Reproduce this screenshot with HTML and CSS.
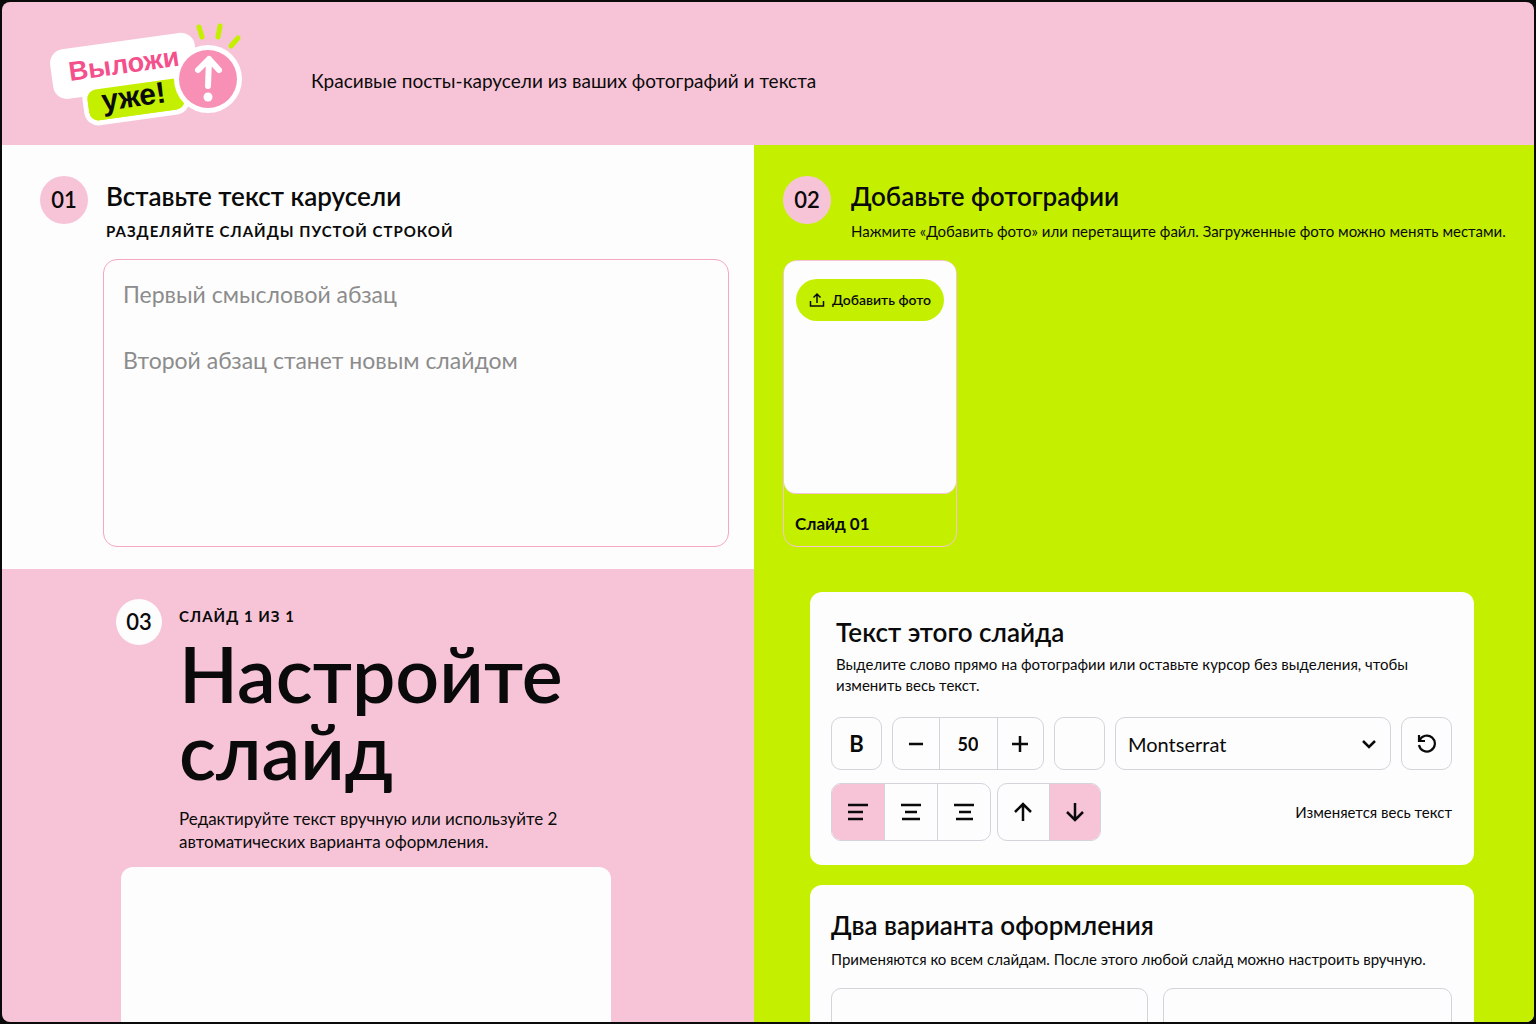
FILE: index.html
```html
<!DOCTYPE html>
<html lang="ru">
<head>
<meta charset="utf-8">
<meta name="viewport" content="width=device-width, initial-scale=1">
<title>Выложи уже!</title>
<link rel="stylesheet" href="styles.css">
</head>
<body>
<div class="app">
  <header class="header">
    <svg class="logo" viewBox="0 0 220 130" role="img" aria-label="Выложи уже!">
      <rect x="48" y="74" width="96" height="31" rx="9" transform="rotate(-8 96 90)" fill="#c4f000" stroke="#fff" stroke-width="10" paint-order="stroke"/>
      <rect x="11" y="31" width="146" height="50" rx="14" transform="rotate(-8 83 56)" fill="#fff"/>
      <rect x="48" y="74" width="96" height="31" rx="9" transform="rotate(-8 96 90)" fill="#c4f000"/>
      <circle cx="168" cy="69" r="34" fill="#fff"/>
      <circle cx="168" cy="69" r="29" fill="#f88fb4"/>
      <path d="M169 49 168 76M158 60 169 49l10 11" fill="none" stroke="#fff" stroke-width="6" stroke-linecap="round" stroke-linejoin="round"/>
      <circle cx="168" cy="87" r="4.5" fill="#fff"/>
      <path d="m159 17 3 10M180 16l-2 11M198 28l-7 8" fill="none" stroke="#c4f000" stroke-width="5" stroke-linecap="round"/>
      <text class="logo-text logo-text-pink" transform="translate(30 71) rotate(-8)">Выложи</text>
      <text class="logo-text" transform="translate(63 101) rotate(-8)">уже!</text>
    </svg>
    <p class="tagline">Красивые посты-карусели из ваших фотографий и текста</p>
  </header>

  <main class="board">
    <div class="column">
      <section class="step step-text">
        <div class="step-head">
          <span class="badge">01</span>
          <div>
            <h2 class="title"><label for="carousel">Вставьте текст карусели</label></h2>
            <p class="caps">РАЗДЕЛЯЙТЕ СЛАЙДЫ ПУСТОЙ СТРОКОЙ</p>
          </div>
        </div>
        <textarea class="source" id="carousel" placeholder="Первый смысловой абзац&#10;&#10;Второй абзац станет новым слайдом"></textarea>
      </section>

      <section class="step-slide">
        <div class="slide-head">
          <span class="badge badge-white">03</span>
          <div>
            <p class="caps caps-small">СЛАЙД 1 ИЗ 1</p>
            <h1 class="display">Настройте слайд</h1>
            <p class="lead">Редактируйте текст вручную или используйте 2 автоматических варианта оформления.</p>
          </div>
        </div>
        <div class="canvas"></div>
      </section>
    </div>

    <div class="column column-lime">
      <section class="step step-photos">
        <div class="step-head">
          <span class="badge">02</span>
          <div>
            <h2 class="title">Добавьте фотографии</h2>
            <p class="hint">Нажмите «Добавить фото» или перетащите файл. Загруженные фото можно менять местами.</p>
          </div>
        </div>
        <article class="photo">
          <div class="photo-drop">
            <button class="upload" type="button">
              <svg width="16" height="16" viewBox="0 0 16 16" fill="none" stroke="currentColor" stroke-width="1.5"><path d="M8 11V2M4.500 5.500 8 2l3.500 3.500M1.500 9v5h13V9"/></svg>
              Добавить фото
            </button>
          </div>
          <h3 class="photo-name">Слайд 01</h3>
        </article>
      </section>

      <div class="panels">
        <section class="panel">
          <div class="panel-intro">
            <h2 class="title">Текст этого слайда</h2>
            <p class="note">Выделите слово прямо на фотографии или оставьте курсор без выделения, чтобы изменить весь текст.</p>
          </div>
          <div class="tools">
            <button class="tool bold" type="button" aria-label="Жирный">B</button>
            <div class="group stepper">
              <button type="button" aria-label="Уменьшить"><svg width="16" height="16" viewBox="0 0 16 16" stroke="currentColor" stroke-width="2.500"><path d="M1 8h14"/></svg></button>
              <input type="text" value="50" aria-label="Размер текста">
              <button type="button" aria-label="Увеличить"><svg width="16" height="16" viewBox="0 0 16 16" stroke="currentColor" stroke-width="2.500"><path d="M0 8h16M8 0v16"/></svg></button>
            </div>
            <input class="tool swatch" type="color" value="#fdfdfd" aria-label="Цвет текста">
            <div class="font-field">
              <select aria-label="Шрифт"><option>Montserrat</option></select>
              <svg width="16" height="16" viewBox="0 0 16 16" fill="none" stroke="currentColor" stroke-width="2.500"><path d="m2 5 6 6 6-6"/></svg>
            </div>
            <button class="tool" type="button" aria-label="Сбросить"><svg width="20" height="20" viewBox="0 0 20 20" fill="none" stroke="currentColor" stroke-width="2.2"><path d="M2 1v6h6M2.500 6.500A8 8 0 1 1 2 11"/></svg></button>
          </div>
          <div class="tools tools-align">
            <div class="group group-align">
              <button class="active" type="button" aria-label="По левому краю"><svg width="20" height="20" viewBox="0 0 20 20" stroke="currentColor" stroke-width="2.500"><path d="M0 3h20M0 10h15M0 17h15"/></svg></button>
              <button type="button" aria-label="По центру"><svg width="20" height="20" viewBox="0 0 20 20" stroke="currentColor" stroke-width="2.500"><path d="M0 3h20M4 10h12M1 17h18"/></svg></button>
              <button type="button" aria-label="По правому краю"><svg width="20" height="20" viewBox="0 0 20 20" stroke="currentColor" stroke-width="2.500"><path d="M0 3h20M5 10h12M2 17h17"/></svg></button>
            </div>
            <div class="group group-vertical">
              <button type="button" aria-label="Сверху"><svg width="20" height="20" viewBox="0 0 20 20" fill="none" stroke="currentColor" stroke-width="2.500"><path d="M10 19V2M2 10l8-8 8 8"/></svg></button>
              <button class="active" type="button" aria-label="Снизу"><svg width="20" height="20" viewBox="0 0 20 20" fill="none" stroke="currentColor" stroke-width="2.500"><path d="M10 1v17M2 10l8 8 8-8"/></svg></button>
            </div>
            <p class="status">Изменяется весь текст</p>
          </div>
        </section>

        <section class="panel">
          <h2 class="title">Два варианта оформления</h2>
          <p class="note-wide">Применяются ко всем слайдам. После этого любой слайд можно настроить вручную.</p>
          <div class="variants">
            <div class="variant"></div>
            <div class="variant"></div>
          </div>
        </section>
      </div>
    </div>
  </main>
</div>
</body>
</html>
```
FILE: styles.css
```css
:root {
  --pink: #f7c4d7;
  --lime: #c4f000;
  --paper: #fdfdfd;
  --ink: #0a0a0a;
  --line: #d3d3dc;
}

* { box-sizing: border-box; }

body {
  margin: 0;
  padding: 2px;
  height: 100vh;
  overflow: hidden;
  background: #0a0a0a;
  color: var(--ink);
  font: 15px/22px Lato, "Noto Sans", sans-serif;
}

h1, h2, h3, p { margin: 0; font-weight: inherit; }
button, input, select, textarea { font: inherit; color: inherit; }
button { padding: 0; border: 0; background: none; }

.app {
  height: 100%;
  display: flex;
  flex-direction: column;
  overflow: hidden;
  border-radius: 8px;
  background: var(--pink);
}

.header {
  flex: none;
  display: flex;
  align-items: flex-start;
  gap: 51px;
  padding: 8px 38px 5px;
}
.logo { width: 220px; height: 130px; }
.logo-text { font: bold 30px "Liberation Sans", sans-serif; fill: var(--ink); }
.logo-text-pink { font-size: 27px; fill: #f4508c; }
.tagline { padding-top: 57px; font-size: 19px; line-height: 28px; }

.board {
  flex: 1;
  display: grid;
  grid-template-columns: 752fr 780fr;
}
.column { min-width: 0; }
.column-lime { background: var(--lime); }

.step { padding: 31px 25px 22px 38px; }
.step-text { background: var(--paper); }
.step-photos { padding: 31px 16px 22px 29px; }
.step-head { display: flex; gap: 18px; height: 83px; }
.step-photos .step-head { gap: 20px; height: 84px; }

.badge {
  flex: none;
  display: grid;
  place-items: center;
  width: 48px;
  height: 48px;
  border-radius: 50%;
  background: var(--pink);
  font-size: 22px;
  font-weight: 600;
}
.badge-white { width: 46px; height: 46px; background: var(--paper); }

.title { font-size: 26px; line-height: 40px; font-weight: 600; }
.caps { font-size: 15px; line-height: 30px; font-weight: 700; letter-spacing: 1px; }
.caps-small { line-height: 34px; }
.hint { line-height: 30px; white-space: nowrap; }

.source {
  display: block;
  width: calc(100% - 63px);
  height: 288px;
  margin-left: 63px;
  padding: 18px 19px;
  border: 1px solid #f7a6c3;
  border-radius: 14px;
  background: var(--paper);
  font-size: 23px;
  line-height: 33px;
  resize: none;
}
.source::placeholder { color: #8c8c8c; opacity: 1; }

.photo {
  width: 174px;
  border: 1px solid var(--pink);
  border-radius: 14px;
}
.photo-drop {
  height: 233px;
  padding: 18px 12px;
  border-bottom: 1px solid var(--pink);
  border-radius: 12px;
  background: var(--paper);
}
.upload {
  display: flex;
  align-items: center;
  justify-content: center;
  gap: 7px;
  width: 100%;
  height: 42px;
  border-radius: 21px;
  background: var(--lime);
  font-size: 14px;
  font-weight: 600;
  white-space: nowrap;
}
.photo-name { padding: 19px 11px 11px; font-size: 17px; font-weight: 700; }

.step-slide { padding: 30px 143px 0 114px; }
.slide-head { display: flex; gap: 17px; }
.display { padding-top: 2px; font-size: 77px; line-height: 77px; font-weight: 600; }
.lead { padding: 18px 0 14px; font-size: 17px; line-height: 23px; }
.canvas { height: 490px; margin-left: 5px; border-radius: 12px; background: var(--paper); }

.panels {
  display: grid;
  grid-template-columns: minmax(0, 1fr);
  gap: 20px;
  padding: 23px 60px 0 56px;
}
.panel { padding: 20px 22px 24px 21px; border-radius: 12px; background: var(--paper); }
.panel-intro { padding-left: 5px; }
.note { padding-top: 2px; line-height: 21px; }
.note-wide { line-height: 29px; white-space: nowrap; }

.tools { display: flex; align-items: stretch; gap: 10px; height: 53px; margin-top: 21px; }
.tools-align { gap: 6px; height: 58px; margin-top: 13px; }
.tool {
  display: grid;
  place-items: center;
  width: 51px;
  height: auto;
  border: 1px solid var(--line);
  border-radius: 10px;
  background: var(--paper);
}
.bold { font-size: 22px; font-weight: 700; }
.swatch { padding: 0; appearance: none; }
.swatch::-webkit-color-swatch-wrapper { padding: 0; }
.swatch::-webkit-color-swatch { border: 0; border-radius: 10px; }

.group {
  display: flex;
  overflow: hidden;
  border: 1px solid var(--line);
  border-radius: 10px;
}
.group > * { flex: 1; display: grid; place-items: center; }
.group > * + * { border: 0; border-left: 1px solid var(--line); }
.group .active { background: var(--pink); }
.group-align { width: 160px; }
.group-vertical { width: 104px; }
.stepper { width: 152px; }
.stepper input { flex: none; width: 58px; padding: 0; background: none; font-size: 18px; font-weight: 700; text-align: center; }

.font-field { flex: 1; display: grid; align-items: center; }
.font-field > * { grid-area: 1 / 1; }
.font-field svg { justify-self: end; margin-right: 14px; pointer-events: none; }
.font-field select {
  width: 100%;
  height: 100%;
  padding: 0 12px;
  border: 1px solid var(--line);
  border-radius: 10px;
  background: var(--paper);
  font-size: 20px;
  appearance: none;
}
.status { margin-left: auto; align-self: center; }

.variants { display: grid; grid-template-columns: 317fr 289fr; gap: 15px; margin-top: 14px; }
.variant { height: 200px; border: 1px solid var(--line); border-radius: 10px; }
```
